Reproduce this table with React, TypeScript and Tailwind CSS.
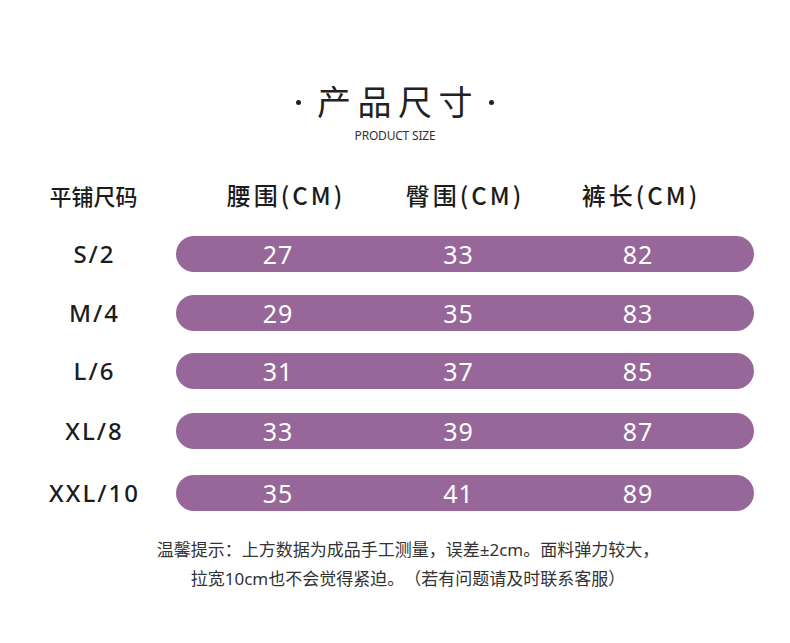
import React from "react";

const rows = [
  { size: "S/2", waist: "27", hip: "33", length: "82", space: "mt-0" },
  { size: "M/4", waist: "29", hip: "35", length: "83", space: "mt-[23px]" },
  { size: "L/6", waist: "31", hip: "37", length: "85", space: "mt-[22px]" },
  { size: "XL/8", waist: "33", hip: "39", length: "87", space: "mt-[24px]" },
  { size: "XXL/10", waist: "35", hip: "41", length: "89", space: "mt-[26px]" },
];

const cjk = { fontFamily: '"Noto Sans CJK SC", "Noto Sans", sans-serif' };
const latin = { fontFamily: '"Noto Sans", "Noto Sans CJK SC", sans-serif' };

export default function App() {
  return (
    <div className="w-[790px] h-[643px] bg-white overflow-hidden text-[#1c1c1c]" style={cjk}>
      {/* TITLE */}
      <div className="pt-[84px] flex flex-col items-center">
        <div className="flex items-center">
          <span className="w-[5px] h-[5px] rounded-full bg-[#222] mt-[3px]" />
          <h1 className="ml-[16px] mr-[10px] text-[34px] leading-[34px] tracking-[6.5px] font-normal text-[#222]">
            产品尺寸
          </h1>
          <span className="w-[5px] h-[5px] rounded-full bg-[#222] mt-[3px]" />
        </div>
        <p className="mt-[12px] text-[12px] leading-[12px] text-[#333] tracking-[-0.2px]" style={latin}>
          PRODUCT SIZE
        </p>
      </div>

      {/* HEADER */}
      <div className="mt-[40px] pl-[37px] flex items-center h-[25px]">
        <div className="w-[113px] text-center text-[22px] leading-[24px] font-medium">平铺尺码</div>
        <div className="ml-[26px] pl-[20px] grid grid-cols-[180px_178px_174px] text-[24px] leading-[24px] font-medium tracking-[3px]">
          <span className="text-center">腰围(CM)</span>
          <span className="text-center">臀围(CM)</span>
          <span className="text-center">裤长(CM)</span>
        </div>
      </div>

      {/* ROWS */}
      <div className="mt-[29px] pl-[37px] flex flex-col">
        {rows.map((r) => (
          <div key={r.size} className={`flex items-center ${r.space}`}>
            <div className="w-[113px] text-center text-[24px] font-medium tracking-[2px] pl-[2px]" style={latin}>
              {r.size}
            </div>
            <div
              className="ml-[26px] w-[578px] h-[36px] rounded-full bg-[#97679a] pl-[12px] grid grid-cols-[180px_181px_178px] items-center text-white text-[25px] leading-[36px] tracking-[1px]"
              style={latin}
            >
              <span className="text-center">{r.waist}</span>
              <span className="text-center">{r.hip}</span>
              <span className="text-center">{r.length}</span>
            </div>
          </div>
        ))}
      </div>

      {/* NOTE */}
      <div
        className="mt-[24px] pl-[26px] text-center text-[17px] leading-[29px] text-[#333] [text-spacing-trim:space-all]"
        style={latin}
      >
        <p>温馨提示：上方数据为成品手工测量，误差±2cm。面料弹力较大，</p>
        <p>拉宽10cm也不会觉得紧迫。（若有问题请及时联系客服）</p>
      </div>
    </div>
  );
}
